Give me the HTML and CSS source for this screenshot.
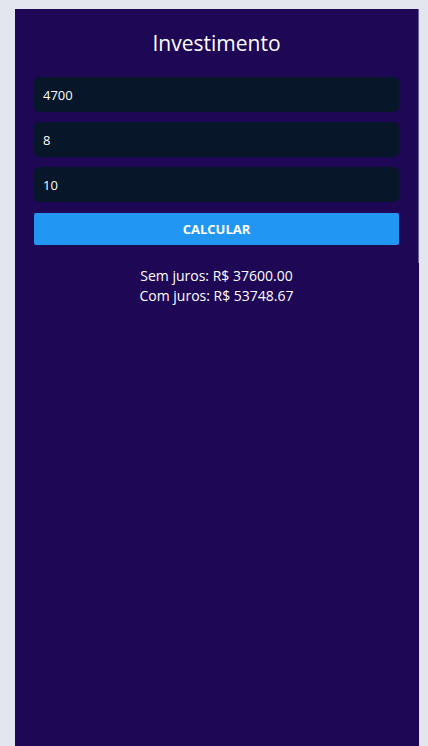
FILE: index.html
```html
<!DOCTYPE html>
<html lang="pt-BR">
<head>
<meta charset="utf-8">
<title>Investimento</title>
<link rel="stylesheet" href="styles.css">
</head>
<body>
<main class="app">
  <section class="card">
    <h1 class="title">Investimento</h1>
    <form class="form">
      <input class="field" type="text" value="4700">
      <input class="field" type="text" value="8">
      <input class="field" type="text" value="10">
      <button class="btn" type="button">CALCULAR</button>
    </form>
    <div class="result">
      <p>Sem juros: R$ 37600.00</p>
      <p>Com juros: R$ 53748.67</p>
    </div>
  </section>
</main>
</body>
</html>
```
FILE: styles.css
```css
html, body {
  margin: 0;
  padding: 0;
  height: 100%;
}
body {
  background: #e4e6ef;
  font-family: "Open Sans", "Noto Sans", sans-serif;
  padding: 9px 9px 0 15px;
  box-sizing: border-box;
  overflow: hidden;
}
.app {
  background: #1e0855;
  height: 100%;
  color: #fff;
}
.card {
  padding: 0 19px;
  border-right: 1px solid #6f62a0;
  height: 254px;
}
.title {
  margin: 0;
  padding-top: 19px;
  font-weight: 400;
  font-size: 21px;
  line-height: 30px;
  text-align: center;
}
.form {
  display: flex;
  flex-direction: column;
  gap: 10px;
  margin-top: 19px;
}
.field {
  height: 35px;
  box-sizing: border-box;
  border: none;
  border-radius: 5px;
  background: #071628;
  color: #fff;
  font-family: inherit;
  font-size: 13px;
  padding: 0 9px;
  outline: none;
}
.btn {
  height: 32px;
  border: none;
  border-radius: 2px;
  background: #2196f3;
  color: #fff;
  font-family: inherit;
  font-weight: 700;
  font-size: 13px;
  margin-top: 1px;
}
.result {
  margin-top: 21px;
  text-align: center;
  font-size: 14px;
  line-height: 20px;
}
.result p {
  margin: 0;
}
```
